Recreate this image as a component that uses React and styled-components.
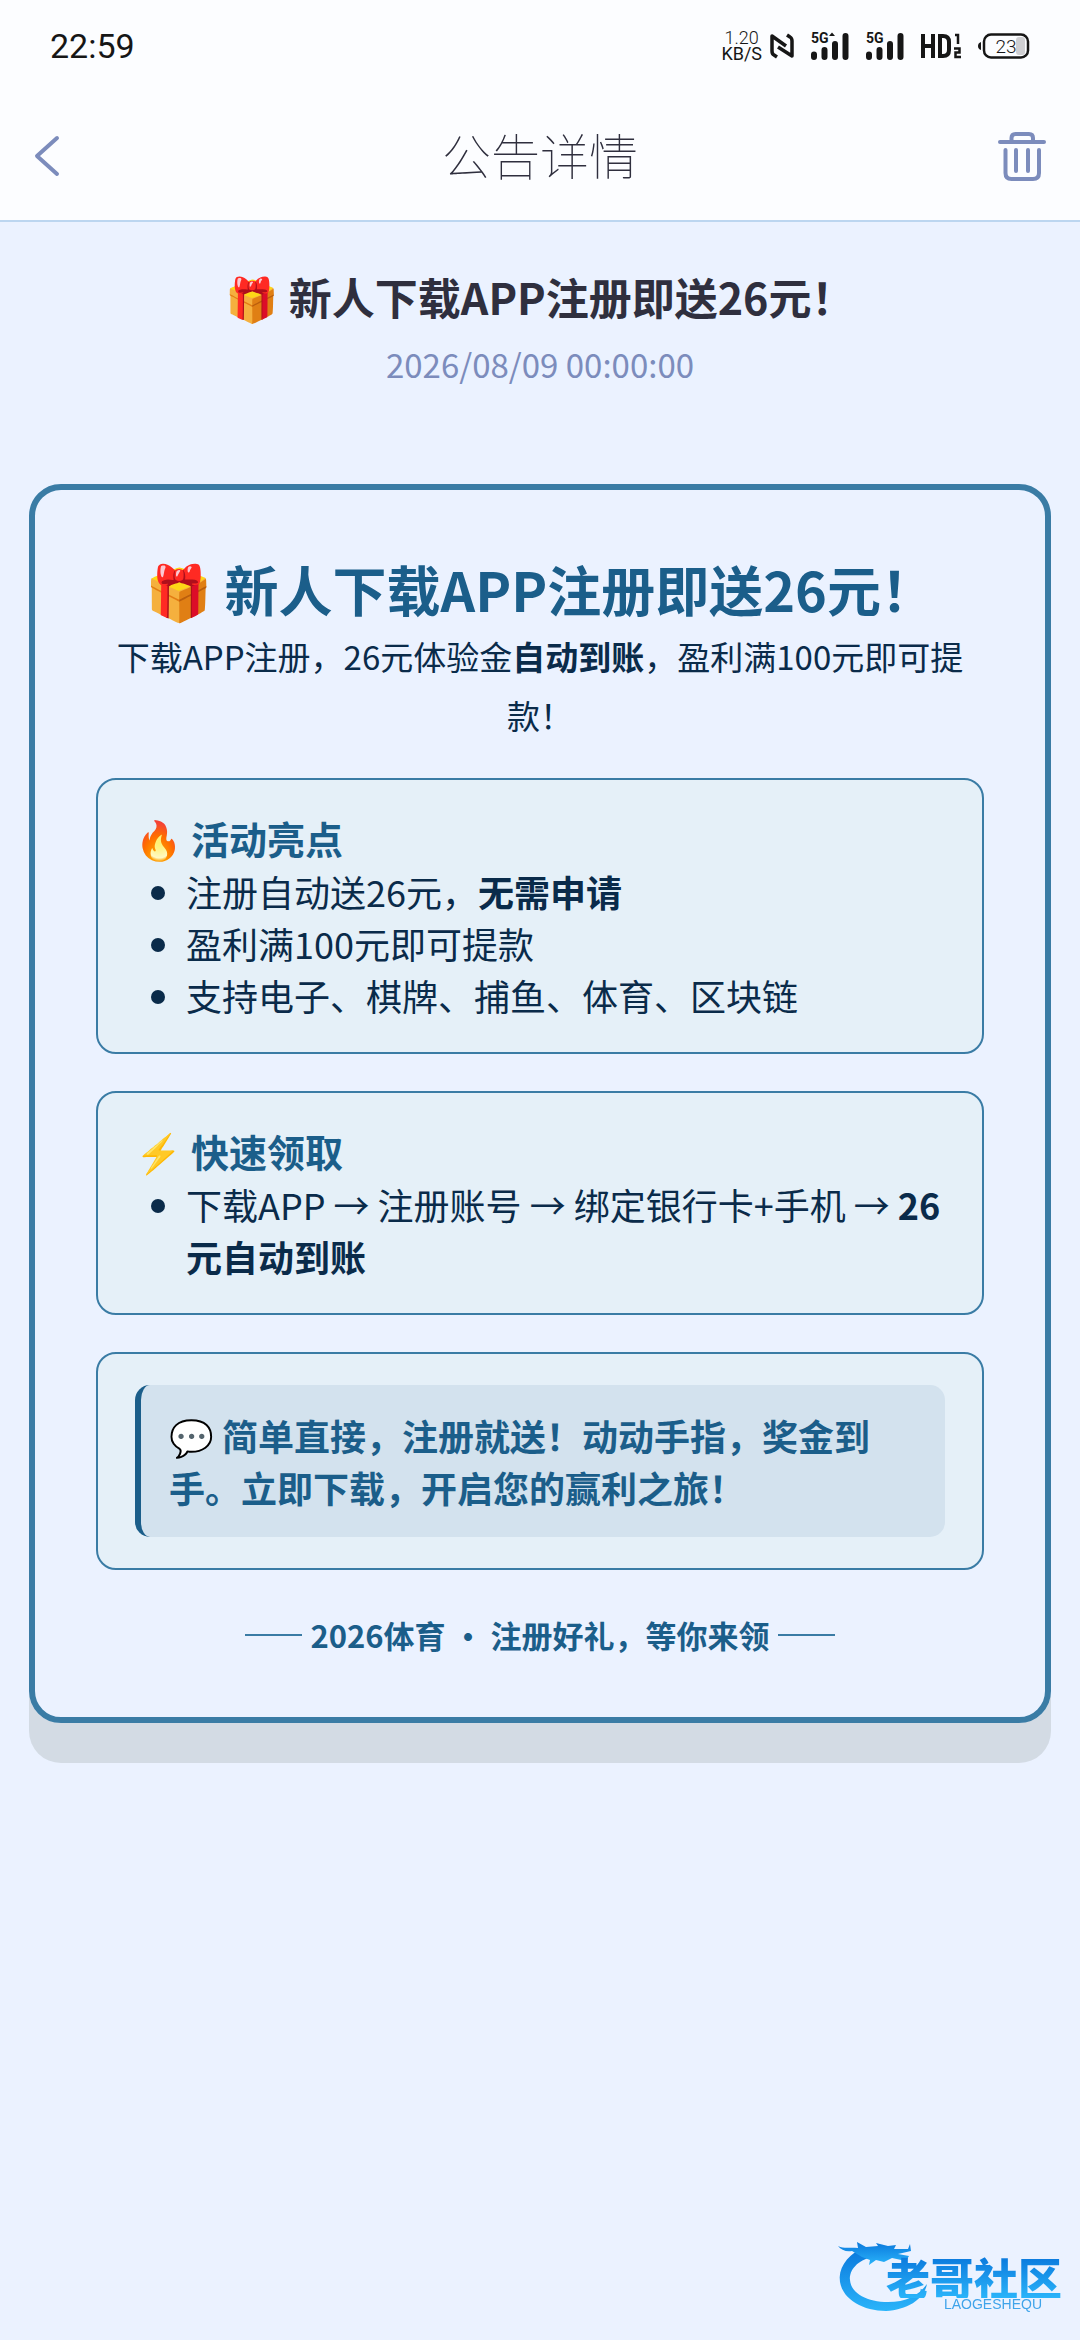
import React from "react";
import styled, { createGlobalStyle } from "styled-components";

const App = () => {
  return (
    <Page>
      <GlobalStyle />
      <Top>
        <StatusBar>
          <Clock>22:59</Clock>
          <StatusIcons>
            <Speed>
              <SpeedValue>1.20</SpeedValue>
              <SpeedUnit>KB/S</SpeedUnit>
            </Speed>
            <NfcIcon />
            <SignalIcon plus />
            <SignalIcon />
            <HdIcon />
            <BatteryIcon />
          </StatusIcons>
        </StatusBar>
        <NavBar>
          <IconBtn aria-label="返回">
            <svg width="26" height="42" viewBox="0 0 26 42" fill="none">
              <path
                d="M23 3 L3 21 L23 39"
                stroke="#7c8cbc"
                strokeWidth="4"
                strokeLinecap="round"
                strokeLinejoin="round"
              />
            </svg>
          </IconBtn>
          <NavTitle>公告详情</NavTitle>
          <IconBtn aria-label="删除" $end>
            <svg width="48" height="50" viewBox="0 0 48 50" fill="none">
              <g stroke="#7c8cbc" strokeWidth="4" strokeLinecap="round">
                <path d="M2 11 H46" />
                <path d="M13.500 11 V7 Q13.500 3 17.500 3 H31 Q35 3 35 7 V11" />
                <path d="M7.500 19 V42 Q7.500 48 13.500 48 H35 Q41 48 41 42 V19" />
                <path d="M18 19 V40 M30 19 V40" />
              </g>
            </svg>
          </IconBtn>
        </NavBar>
      </Top>
      <Heading>
        <Title>🎁 新人下载APP注册即送26元！</Title>
        <Time>2026/08/09 00:00:00</Time>
      </Heading>
      <Card>
        <CardTitle>🎁 新人下载APP注册即送26元！</CardTitle>
        <Intro>
          下载APP注册，26元体验金<Strong>自动到账</Strong>
          ，盈利满100元即可提款！
        </Intro>
        <Section>
          <SectionTitle>🔥 活动亮点</SectionTitle>
          <List>
            <li>
              注册自动送26元，<Strong>无需申请</Strong>
            </li>
            <li>盈利满100元即可提款</li>
            <li>支持电子、棋牌、捕鱼、体育、区块链</li>
          </List>
        </Section>
        <Section>
          <SectionTitle>⚡ 快速领取</SectionTitle>
          <List>
            <li>
              下载APP → 注册账号 → 绑定银行卡+手机 →{" "}
              <Strong>26元自动到账</Strong>
            </li>
          </List>
        </Section>
        <Section>
          <Quote>
            💬 简单直接，注册就送！动动手指，奖金到手。立即下载，开启您的赢利之旅！
          </Quote>
        </Section>
        <Footer>
          <Line />
          <span>2026体育 · 注册好礼，等你来领</span>
          <Line />
        </Footer>
      </Card>
      <Watermark>
        <Dragon />
        <Brand>
          <BrandName>老哥社区</BrandName>
          <BrandSub>LAOGESHEQU</BrandSub>
        </Brand>
      </Watermark>
    </Page>
  );
};

const NfcIcon = () => (
  <svg width="24" height="26" viewBox="0 0 24 26" fill="none">
    <path
      d="M7 24 L4 22 Q2 21 2 18 V3 L16 13 M17 2 L20 4 Q22 5 22 8 V23 L8 14"
      stroke="#161616"
      strokeWidth="3.500"
      strokeLinejoin="round"
    />
  </svg>
);

const SignalIcon = ({ plus }) => (
  <svg width="39" height="35" viewBox="0 -3 39 35">
    <g stroke="#161616" strokeWidth="6" strokeLinecap="round">
      <path d="M4 22.500 V25 M14.500 18 V25 M25 12 V25 M35.500 4 V25" />
    </g>
    <text
      x="1"
      y="11"
      fontFamily="Roboto, sans-serif"
      fontSize="14"
      fontWeight="700"
      fill="#161616"
    >
      5G
    </text>
    {plus && <path d="M19 4 L22 0.500 L25 4 Z" fill="#161616" />}
  </svg>
);

const HdIcon = () => (
  <svg width="42" height="28" viewBox="0 0 42 28" fill="none">
    <g stroke="#161616" strokeWidth="4">
      <path d="M3 2 V26 M13 2 V26 M3 14 H13" />
      <path d="M20 4 H23 Q29 4 29 10 V18 Q29 24 23 24 H20 Z" />
    </g>
    <path
      d="M35 3 H38 V12 M34 16.500 H39.500 V20.500 H35.500 V25 H41"
      stroke="#161616"
      strokeWidth="2.500"
    />
  </svg>
);

const BatteryIcon = () => (
  <svg width="52" height="26" viewBox="0 0 52 26">
    <path d="M3 9 Q0 10 0 13 Q0 16 3 17 Z" fill="#161616" />
    <rect x="38" y="4" width="9" height="18" rx="3" fill="#cfcfd2" />
    <rect
      x="6"
      y="1.500"
      width="44"
      height="23"
      rx="7"
      fill="none"
      stroke="#161616"
      strokeWidth="2.500"
    />
    <text
      x="28"
      y="20"
      textAnchor="middle"
      fontFamily="Roboto, sans-serif"
      fontSize="19"
      fontWeight="300"
      fill="#161616"
    >
      23
    </text>
  </svg>
);

const Dragon = () => (
  <svg width="92" height="72" viewBox="0 0 92 72">
    <defs>
      <linearGradient id="dragon" x1="0" y1="0" x2="0" y2="1">
        <stop offset="0" stopColor="#0a78dc" />
        <stop offset="1" stopColor="#2ab4fa" />
      </linearGradient>
    </defs>
    <g fill="url(#dragon)">
      <path d="M22 9 C8 17 0 29 2 42 C5 60 26 71 48 71 C68 70 86 60 89 44 C80 56 68 62 50 62 C30 62 13 54 12 40 C11 30 20 20 34 17 Z" />
      <path d="M0 6 C6 9 12 7 20 8 L19 2 L28 7 L40 6 L38 3 L50 6 L58 5 L56 9 L70 9 L72 4 L73 11 L60 14 L71 16 L68 21 L54 18 L46 22 L38 20 L31 25 L32 20 L24 17 L14 11 C8 12 3 10 0 6 Z" />
    </g>
  </svg>
);

const GlobalStyle = createGlobalStyle`
  * {
    box-sizing: border-box;
  }
  body {
    margin: 0;
    background-color: #ebf2ff;
    font-family: "Noto Sans CJK SC", "Noto Color Emoji", sans-serif;
  }
`;

const Page = styled.div`
  min-height: 100vh;
  color: #0a2b4a;
`;

const Top = styled.header`
  background-color: #fcfdff;
  border-bottom: 2px solid #bcd6f0;
`;

const StatusBar = styled.div`
  display: flex;
  justify-content: space-between;
  align-items: center;
  height: 92px;
  padding: 0 50px;
  font-family: Roboto, sans-serif;
  color: #161616;
`;

const Clock = styled.span`
  font-size: 34px;
`;

const StatusIcons = styled.div`
  display: flex;
  align-items: center;
  gap: 16px;
`;

const Speed = styled.div`
  display: flex;
  flex-direction: column;
  align-items: center;
  margin-right: -8px;
  line-height: 16px;
`;

const SpeedValue = styled.span`
  font-size: 18px;
  font-weight: 300;
`;

const SpeedUnit = styled.span`
  font-size: 18px;
`;

const NavBar = styled.div`
  display: grid;
  grid-template-columns: 1fr auto 1fr;
  align-items: center;
  height: 128px;
  padding: 0 34px;
`;

const IconBtn = styled.button`
  display: flex;
  justify-self: ${(props) => (props.$end ? "end" : "start")};
  border: none;
  padding: 0;
  background: none;
`;

const NavTitle = styled.h1`
  margin: 0;
  padding-bottom: 6px;
  font-size: 49px;
  font-weight: 100;
  color: #2f2f3e;
`;

const Heading = styled.div`
  padding: 42px 30px 90px;
  text-align: center;
`;

const Title = styled.h2`
  margin: 0;
  font-size: 43px;
  line-height: 64px;
  color: #2f2f3e;
`;

const Time = styled.p`
  margin: 6px 0 0;
  font-size: 33px;
  line-height: 60px;
  color: #7c8cbc;
`;

const Card = styled.main`
  margin: 0 29px;
  padding: 61px;
  border: 6px solid #3a7ca5;
  border-radius: 32px;
  box-shadow: 0 40px 0 #d3dbe4;
`;

const CardTitle = styled.h2`
  margin: 0;
  font-size: 54px;
  line-height: 76px;
  text-align: center;
  color: #1b5e8a;
`;

const Intro = styled.p`
  margin: 0 0 33px;
  font-size: 33px;
  line-height: 59px;
  text-align: center;
`;

const Strong = styled.strong`
  font-weight: 700;
`;

const Section = styled.section`
  margin-bottom: 37px;
  padding: 31px 37px;
  border: 2px solid #3a7ca5;
  border-radius: 20px;
  background-color: #e5f0f8;
`;

const SectionTitle = styled.h3`
  margin: 0;
  font-size: 38px;
  line-height: 54px;
  color: #1b5e8a;
`;

const List = styled.ul`
  margin: 0;
  padding-left: 51px;
  font-size: 36px;
  line-height: 52px;
`;

const Quote = styled.blockquote`
  margin: 0;
  padding: 24px 28px;
  border-left: 6px solid #1b5e8a;
  border-radius: 15px;
  background-color: #d3e2ee;
  font-size: 36px;
  font-weight: 700;
  line-height: 52px;
  color: #1b5e8a;
`;

const Footer = styled.footer`
  display: flex;
  justify-content: center;
  align-items: center;
  gap: 8px;
  padding-top: 6px;
  font-size: 31px;
  font-weight: 700;
  line-height: 43px;
  color: #1b5e8a;
`;

const Line = styled.span`
  width: 57px;
  border-top: 2px solid #3a7ca5;
`;

const Watermark = styled.div`
  position: fixed;
  right: 18px;
  bottom: 28px;
  display: flex;
  align-items: flex-end;
`;

const Brand = styled.div`
  display: flex;
  flex-direction: column;
  align-items: flex-end;
  margin-left: -44px;
  padding-bottom: 2px;
`;

const BrandName = styled.span`
  font-size: 44px;
  font-weight: 900;
  line-height: 42px;
  color: transparent;
  background: linear-gradient(#0a78dc, #2ab4fa);
  background-clip: text;
`;

const BrandSub = styled.span`
  padding-right: 20px;
  font-family: "Liberation Sans", sans-serif;
  font-size: 14px;
  line-height: 12px;
  color: #3fa4ea;
`;

export default App;
